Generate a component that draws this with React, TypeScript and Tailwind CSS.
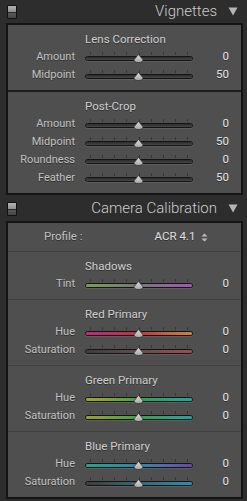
import React from 'react';

type SliderRow = { label: string; value: string; track?: string };
type Section = { title: string; rows: SliderRow[] };

const GRAY_TRACK = 'bg-linear-to-b from-[#2c2c2c] to-[#474747]';

const lensCorrection: Section = {
  title: 'Lens Correction',
  rows: [
    { label: 'Amount', value: '0' },
    { label: 'Midpoint', value: '50' },
  ],
};

const postCrop: Section = {
  title: 'Post-Crop',
  rows: [
    { label: 'Amount', value: '0' },
    { label: 'Midpoint', value: '50' },
    { label: 'Roundness', value: '0' },
    { label: 'Feather', value: '50' },
  ],
};

const calibration: Section[] = [
  {
    title: 'Shadows',
    rows: [{ label: 'Tint', value: '0', track: 'bg-linear-to-r from-[#76a050] via-[#767676] to-[#a452b8]' }],
  },
  {
    title: 'Red Primary',
    rows: [
      { label: 'Hue', value: '0', track: 'bg-linear-to-r from-[#bc2a7c] via-[#bc3444] to-[#c8843a]' },
      { label: 'Saturation', value: '0', track: 'bg-linear-to-r from-[#3c3c3c] via-[#664c4c] to-[#a04c4c]' },
    ],
  },
  {
    title: 'Green Primary',
    rows: [
      { label: 'Hue', value: '0', track: 'bg-linear-to-r from-[#a2a42a] via-[#36a246] to-[#26a29c]' },
      { label: 'Saturation', value: '0', track: 'bg-linear-to-r from-[#96a02e] via-[#38a246] to-[#26a2a0]' },
    ],
  },
  {
    title: 'Blue Primary',
    rows: [
      { label: 'Hue', value: '0', track: 'bg-linear-to-r from-[#2aa284] via-[#2a84ae] to-[#6448b0]' },
      { label: 'Saturation', value: '0', track: 'bg-linear-to-r from-[#3c3c3c] via-[#34687a] to-[#2490ae]' },
    ],
  },
];

const TICKS = [0, 1, 2, 3, 4, 5, 6, 7, 8];

function Thumb() {
  return (
    <svg className="absolute left-[48px] top-[6px]" width="11" height="9" viewBox="0 0 11 9">
      <defs>
        <linearGradient id="thumb" x1="0" y1="0" x2="0" y2="1">
          <stop offset="0" stopColor="#e2e2e2" />
          <stop offset="1" stopColor="#a4a4a4" />
        </linearGradient>
      </defs>
      <path d="M5.5 0.5 L9.8 5.6 Q10.4 8.5 5.5 8.5 Q0.6 8.5 1.2 5.6 Z" fill="url(#thumb)" stroke="#2a2a2a" strokeWidth="0.7" />
    </svg>
  );
}

function Slider({ track }: { track?: string }) {
  return (
    <div className="relative flex h-[18px] w-[108px] flex-col pt-[4px]">
      <div className="flex h-[3px] justify-between px-[5px]">
        {TICKS.map((t) => (
          <span key={t} className="w-px bg-[#363636]" />
        ))}
      </div>
      <div className="mt-[1px] h-[5px] rounded-full border border-[#141414] shadow-[0_1px_0_#5e5e5e]">
        <div className={`h-full rounded-full ${track ?? GRAY_TRACK}`} />
      </div>
      <Thumb />
    </div>
  );
}

function Row({ row }: { row: SliderRow }) {
  return (
    <div className="flex h-[18px] items-center">
      <span className="w-[67px] text-right text-[11px] text-[#c2c2c2] [text-shadow:0_1px_0_#303030]">{row.label}</span>
      <div className="ml-[10px]">
        <Slider track={row.track} />
      </div>
      <span className="w-[36px] text-right text-[11.5px] text-[#e4e4e4] [text-shadow:0_1px_0_#303030]">{row.value}</span>
    </div>
  );
}

function Group({ section }: { section: Section }) {
  return (
    <div className="pt-[5px] pb-[6px]">
      <div className="h-[18px] pl-[77px] text-[11.5px] leading-[18px] text-[#cfcfcf] [text-shadow:0_1px_0_#303030]">
        {section.title}
      </div>
      {section.rows.map((r) => (
        <Row key={r.label} row={r} />
      ))}
    </div>
  );
}

function Toggle() {
  return (
    <div className="flex h-[14px] w-[10px] flex-col overflow-hidden rounded-[1px] border border-[#111]">
      <div className="h-[6px] bg-linear-to-b from-[#b4b4b4] to-[#8e8e8e]" />
      <div className="h-px bg-[#2a2a2a]" />
      <div className="flex-1 bg-linear-to-b from-[#5a5a5a] to-[#444]" />
    </div>
  );
}

function Header({ title, tall }: { title: string; tall?: boolean }) {
  return (
    <div className={`flex items-center pl-[7px] pr-[9px] ${tall ? 'h-[26px] pt-[1px]' : 'h-[23px]'}`}>
      <Toggle />
      <span className="ml-auto text-[15px] font-light text-[#cccccc]">{title}</span>
      <svg className="ml-[11px]" width="10" height="9" viewBox="0 0 10 9">
        <path d="M0.5 0.5 H9.5 L5 8.5 Z" fill="#b4b4b4" />
      </svg>
    </div>
  );
}

export default function App() {
  return (
    <div className="h-[501px] w-[247px] overflow-hidden bg-[#2d2d2d] font-['Roboto',sans-serif]">
      <Header title="Vignettes" />
      <div className="ml-[6px] w-[237px] border-2 border-[#141414] bg-[#4f4f4f]">
        <Group section={lensCorrection} />
        <div className="h-[2px] bg-[#1c1c1c]" />
        <Group section={postCrop} />
      </div>
      <Header title="Camera Calibration" tall />
      <div className="ml-[6px] w-[237px] border-2 border-[#141414] bg-[#4f4f4f]">
        <div className="flex h-[28px] items-center text-[11.5px] [text-shadow:0_1px_0_#303030]">
          <span className="pl-[36px] text-[#c2c2c2]">Profile :</span>
          <span className="ml-[72px] text-[#e0e0e0]">ACR 4.1</span>
          <svg className="ml-[6px]" width="7" height="9" viewBox="0 0 7 9">
            <path d="M3.5 0.5 L6.5 3.5 H0.5 Z M0.5 5.5 H6.5 L3.5 8.5 Z" fill="#bdbdbd" />
          </svg>
        </div>
        {calibration.map((s) => (
          <div key={s.title} className="border-t border-[#424242]">
            <Group section={s} />
          </div>
        ))}
      </div>
    </div>
  );
}
